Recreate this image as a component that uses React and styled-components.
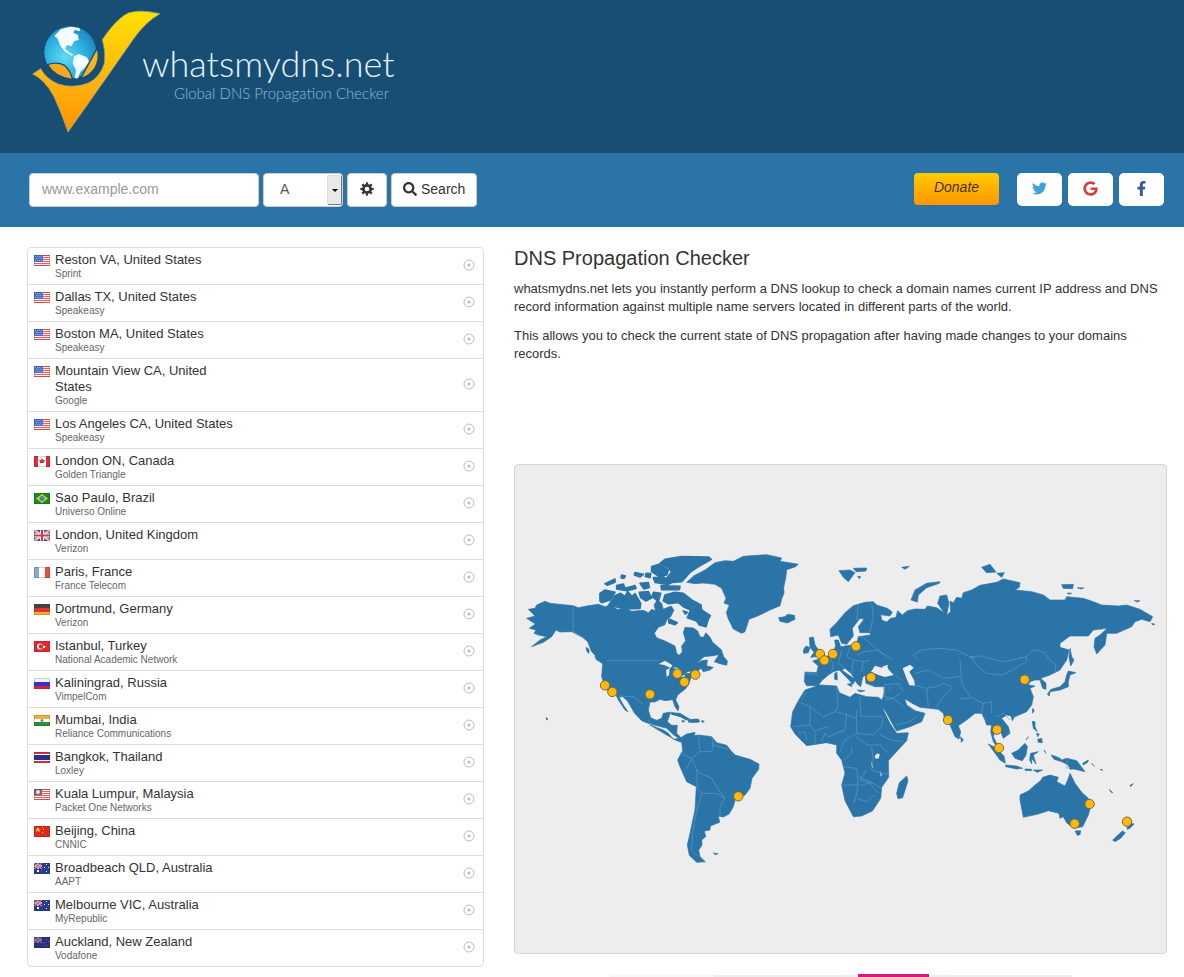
import React from "react"
import styled, { createGlobalStyle } from "styled-components"
import { FaFacebookF, FaGoogle, FaSearch, FaTwitter } from "react-icons/fa"

const GlobalStyle = createGlobalStyle`
  * {
    box-sizing: border-box;
  }

  body {
    margin: 0;
    background: #fff;
    color: #333;
    font-family: "Liberation Sans", Helvetica, Arial, sans-serif;
    font-size: 13px;
    line-height: 18px;
  }
`

const Header = styled.header`
  background: #194e74;
  padding: 0 32px 3px;
`

const Brand = styled.a`
  display: flex;
  color: #fff;
  text-decoration: none;
  font-family: Lato, sans-serif;
  font-weight: 300;

  svg {
    width: 110px;
    height: 150px;
    overflow: visible;
    flex: none;
  }
`

const BrandText = styled.span`
  display: flex;
  flex-direction: column;
  padding-top: 42px;
`

const BrandName = styled.span`
  font-size: 36px;
  line-height: 42px;
  color: #e3f4ff;
`

const BrandTagline = styled.span`
  font-size: 15px;
  line-height: 18px;
  padding-left: 32px;
  color: #8fb8d6;
`

const Toolbar = styled.div`
  display: flex;
  flex-wrap: wrap;
  justify-content: space-between;
  gap: 16px;
  padding: 20px 20px 20px 29px;
  background: #2b74a8;
`

const SearchForm = styled.form`
  display: flex;
  gap: 4px;
`

const DomainInput = styled.input`
  width: 230px;
  height: 34px;
  padding: 0 12px 2px;
  border: 1px solid #ccc;
  border-radius: 4px;
  background: #fff;
  color: #555;
  font: inherit;
  font-size: 14px;

  &::placeholder {
    color: #999;
    opacity: 1;
  }
`

const SelectWrap = styled.div`
  position: relative;
  width: 80px;

  select {
    width: 100%;
    height: 34px;
    padding: 0 16px 2px;
    appearance: none;
    border: 1px solid #ccc;
    border-radius: 4px;
    background: #fff;
    color: #555;
    font: inherit;
    font-size: 14px;
  }

  span {
    position: absolute;
    top: 2px;
    right: 1px;
    width: 15px;
    height: 30px;
    display: flex;
    align-items: center;
    justify-content: center;
    background: #e9e9e9;
    border: 1px solid #ddd;
    border-right-color: #777;
    border-bottom-color: #777;
    border-radius: 2px;
    pointer-events: none;
  }

  span::after {
    content: "";
    border: 3px solid transparent;
    border-top-color: #000;
    border-bottom: 0;
  }
`

const Button = styled.button`
  display: flex;
  align-items: center;
  justify-content: center;
  gap: 4px;
  height: 34px;
  padding: 0 11px 2px;
  border: 1px solid #ccc;
  border-radius: 4px;
  background: #fff;
  color: #333;
  font: inherit;
  font-size: 14px;

  .gear {
    width: 16px;
    height: 16px;
  }
`

const Actions = styled.div`
  display: flex;
  gap: 6px;
`

const Donate = styled.a`
  width: 85px;
  height: 32px;
  margin-right: 12px;
  border-radius: 4px;
  background: linear-gradient(#fecb00, #ff9600);
  color: #4a3206;
  font-size: 14px;
  font-style: italic;
  line-height: 29px;
  text-align: center;
  text-decoration: none;
`

const Social = styled.a`
  display: flex;
  align-items: center;
  justify-content: center;
  width: 45px;
  height: 33px;
  padding-bottom: 2px;
  border-radius: 5px;
  background: #fff;
  color: ${({ $color }) => $color};
  font-size: 15px;
`

const Content = styled.main`
  display: grid;
  grid-template-columns: 457fr 653fr;
  gap: 30px;
  padding: 20px 17px 0 27px;
`

const ServerList = styled.ul`
  margin: 0;
  padding: 0;
  list-style: none;
  align-self: start;
  border: 1px solid #ddd;
  border-radius: 4px;
`

const Server = styled.li`
  display: flex;
  align-items: center;
  gap: 5px;
  padding: 4px 8px 4px 6px;

  & + & {
    border-top: 1px solid #ddd;
  }

  .flag {
    width: 16px;
    height: 11px;
    margin-top: 3px;
    align-self: flex-start;
    flex: none;
  }

  .status {
    width: 12px;
    height: 12px;
    margin-left: auto;
    margin-bottom: 2px;
    flex: none;
  }
`

const ServerInfo = styled.div`
  width: 184px;
`

const ServerName = styled.div`
  line-height: 16px;
`

const Provider = styled.div`
  color: #666;
  font-size: 10px;
  line-height: 12px;
`

const Intro = styled.section`
  min-height: 217px;

  h1 {
    margin: 0 0 11px;
    font-size: 20px;
    font-weight: 400;
    line-height: 22px;
  }

  p {
    margin: 0 0 11px;
  }
`

const MapPanel = styled.div`
  border: 1px solid #d5d5d5;
  border-radius: 4px;
  background: #ededed;

  svg {
    display: block;
    width: 100%;
    height: auto;
  }
`

const Tabs = styled.div`
  display: flex;
  align-items: flex-end;
  width: 71%;
  height: 3px;
  margin: 20px auto 0;

  &::before,
  &::after {
    content: "";
    flex: 250;
    height: 2px;
    background: linear-gradient(90deg, #f8f8f8 42%, #eee 42%);
  }

  &::after {
    flex: 143;
    background: #eee;
  }

  span {
    flex: 71;
    height: 3px;
    background: #cf1a82;
  }
`

const servers = [
  { flag: "us", name: "Reston VA, United States", provider: "Sprint" },
  { flag: "us", name: "Dallas TX, United States", provider: "Speakeasy" },
  { flag: "us", name: "Boston MA, United States", provider: "Speakeasy" },
  { flag: "us", name: "Mountain View CA, United States", provider: "Google" },
  { flag: "us", name: "Los Angeles CA, United States", provider: "Speakeasy" },
  { flag: "ca", name: "London ON, Canada", provider: "Golden Triangle" },
  { flag: "br", name: "Sao Paulo, Brazil", provider: "Universo Online" },
  { flag: "gb", name: "London, United Kingdom", provider: "Verizon" },
  { flag: "fr", name: "Paris, France", provider: "France Telecom" },
  { flag: "de", name: "Dortmund, Germany", provider: "Verizon" },
  { flag: "tr", name: "Istanbul, Turkey", provider: "National Academic Network" },
  { flag: "ru", name: "Kaliningrad, Russia", provider: "VimpelCom" },
  { flag: "in", name: "Mumbai, India", provider: "Reliance Communications" },
  { flag: "th", name: "Bangkok, Thailand", provider: "Loxley" },
  { flag: "my", name: "Kuala Lumpur, Malaysia", provider: "Packet One Networks" },
  { flag: "cn", name: "Beijing, China", provider: "CNNIC" },
  { flag: "au", name: "Broadbeach QLD, Australia", provider: "AAPT" },
  { flag: "au", name: "Melbourne VIC, Australia", provider: "MyRepublic" },
  { flag: "nz", name: "Auckland, New Zealand", provider: "Vodafone" },
]

// pin positions, in map units
const pins = [
  [270, 661], [292, 681], [405, 688], [487, 626], [508, 651], [541, 629],
  [670, 994], [915, 567], [928, 586], [954, 567], [1023, 544], [1068, 637],
  [1299, 765], [1446, 794], [1452, 849], [1529, 644], [1724, 1017],
  [1679, 1076], [1836, 1070],
]

const unionJack = (
  <>
    <path d="M0 0l8 6M8 0L0 6" stroke="#b9c4e6" strokeWidth="1" />
    <path d="M4 0v6M0 3h8" stroke="#fff" strokeWidth="2" />
    <path d="M4 0v6M0 3h8" stroke="#d33" strokeWidth="1" />
  </>
)

const flags = {
  us: (
    <>
      <path fill="#fbeeee" d="M0 0h16v11H0z" />
      <path fill="#e8605c" d="M0 0h16v1H0zM0 2h16v1H0zM0 4h16v1H0zM0 6h16v1H0zM0 8h16v1H0zM0 10h16v1H0z" />
      <path fill="#4a72cc" d="M0 0h9v7H0z" />
      <path fill="#86a3e2" d="M1 1h1v1H1zM3 1h1v1H3zM5 1h1v1H5zM7 1h1v1H7zM2 3h1v1H2zM4 3h1v1H4zM6 3h1v1H6zM1 5h1v1H1zM3 5h1v1H3zM5 5h1v1H5zM7 5h1v1H7z" />
    </>
  ),
  ca: (
    <>
      <path fill="#fff" d="M0 0h16v11H0z" />
      <path fill="#dd2f35" d="M0 0h4v11H0zM12 0h4v11h-4zM8 2l1 2 2 0-1 2 0 1-2 0v2-2H6V6L5 4h2z" />
    </>
  ),
  br: (
    <>
      <path fill="#1d8a1d" d="M0 0h16v11H0z" />
      <path fill="#b5dc3a" d="M8 1l6 4.500-6 4.500-6-4.500z" />
      <circle cx="8" cy="5.500" r="2.500" fill="#4b7fc0" />
    </>
  ),
  gb: (
    <>
      <path fill="#4a5ca8" d="M0 0h16v11H0z" />
      <path d="M0 0l16 11M16 0L0 11" stroke="#fff" strokeWidth="2" />
      <path d="M0 0l16 11M16 0L0 11" stroke="#e08a8a" strokeWidth="1" />
      <path d="M8 0v11M0 5.500h16" stroke="#fff" strokeWidth="4" />
      <path d="M8 0v11M0 5.500h16" stroke="#d63a40" strokeWidth="2" />
    </>
  ),
  fr: (
    <>
      <path fill="#fff" d="M0 0h16v11H0z" />
      <path fill="#8ea6dc" d="M0 0h5v11H0z" />
      <path fill="#e9513e" d="M11 0h5v11h-5z" />
    </>
  ),
  de: (
    <>
      <path fill="#444" d="M0 0h16v4H0z" />
      <path fill="#e2362c" d="M0 4h16v4H0z" />
      <path fill="#f4b427" d="M0 8h16v3H0z" />
    </>
  ),
  tr: (
    <>
      <path fill="#e52a2f" d="M0 0h16v11H0z" />
      <circle cx="6" cy="5.500" r="3" fill="#fff" />
      <circle cx="7" cy="5.500" r="2.200" fill="#e52a2f" />
      <path fill="#fff" d="M9 4l1 1h2l-1 1 0 1-2 0z" />
    </>
  ),
  ru: (
    <>
      <path fill="#f5f5f5" d="M0 0h16v4H0z" />
      <path fill="#3434cf" d="M0 4h16v4H0z" />
      <path fill="#df2233" d="M0 8h16v3H0z" />
    </>
  ),
  in: (
    <>
      <path fill="#f3b13a" d="M0 0h16v4H0z" />
      <path fill="#fff" d="M0 4h16v3H0z" />
      <path fill="#2f8f34" d="M0 7h16v4H0z" />
      <circle cx="8" cy="5.500" r="1.500" fill="#7a86b5" />
    </>
  ),
  th: (
    <>
      <path fill="#e03338" d="M0 0h16v11H0z" />
      <path fill="#fff" d="M0 2h16v7H0z" />
      <path fill="#2b2f8f" d="M0 3h16v5H0z" />
    </>
  ),
  my: (
    <>
      <path fill="#fbeeee" d="M0 0h16v11H0z" />
      <path fill="#e8605c" d="M0 0h16v1H0zM0 2h16v1H0zM0 4h16v1H0zM0 6h16v1H0zM0 8h16v1H0zM0 10h16v1H0z" />
      <path fill="#6b6a8c" d="M0 0h8v6H0z" />
      <circle cx="4" cy="3" r="2" fill="#f3e6b8" />
    </>
  ),
  cn: (
    <>
      <path fill="#e0281e" d="M0 0h16v11H0z" />
      <path fill="#fbd03b" d="M4 1l1 2h2L5 4l1 2-2-1-2 1 1-2-2-1h2zM8 1h1v1H8zM9 3h1v1H9zM8 6h1v1H8z" />
    </>
  ),
  au: (
    <>
      <path fill="#293f8e" d="M0 0h16v11H0z" />
      {unionJack}
      <path fill="#fff" d="M3 7h2v2H3zM12 1h1v1h-1zM14 4h1v1h-1zM10 4h1v1h-1zM12 8h1v1h-1z" />
    </>
  ),
  nz: (
    <>
      <path fill="#26337c" d="M0 0h16v11H0z" />
      <g opacity=".6">{unionJack}</g>
      <path fill="#e05a6a" d="M12 2h1v1h-1zM14 4h1v1h-1zM10 5h1v1h-1zM12 8h1v1h-1z" />
    </>
  ),
}

const Flag = ({ code }) => (
  <svg className="flag" viewBox="0 0 16 11" fill="none" aria-hidden="true">
    {flags[code]}
    <path d="M.5.5h15v10H.5z" stroke="#222" strokeOpacity=".2" />
  </svg>
)

const Pending = () => (
  <svg className="status" viewBox="0 0 12 12" fill="none" aria-hidden="true">
    <circle cx="6" cy="6" r="5" stroke="#bbb" strokeWidth="1" />
    <circle cx="6" cy="6" r="1.500" fill="#bbb" />
  </svg>
)

const Gear = () => (
  <svg className="gear" viewBox="0 0 16 16" fill="none" stroke="currentColor" aria-hidden="true">
    <circle cx="8" cy="8" r="3.700" strokeWidth="2.700" />
    <circle
      cx="8"
      cy="8"
      r="5.600"
      strokeWidth="2.200"
      pathLength="80"
      strokeDasharray="5 5"
      strokeDashoffset="2.500"
    />
  </svg>
)

const Logo = () => (
  <svg viewBox="36 0 330 450" aria-hidden="true">
    <defs>
      <linearGradient id="tick" x1="0" y1="0" x2="0" y2="1">
        <stop offset="0" stopColor="#ffe100" />
        <stop offset=".6" stopColor="#ffb110" />
        <stop offset="1" stopColor="#ff9200" />
      </linearGradient>
      <radialGradient id="globe" cx=".4" cy=".6" r=".65">
        <stop offset="0" stopColor="#5fdcf5" />
        <stop offset=".6" stopColor="#2bb0de" />
        <stop offset="1" stopColor="#1b86c2" />
      </radialGradient>
    </defs>
    <path
      d="M38 222L62 206Q80 238 115 252Q160 267 205 249Q240 233 253 190Q258 155 247 119Q290 55 325 39Q360 27 420 41Q375 67 342 115Q300 175 258 235Q204 312 144 396Q125 340 102 290Q74 238 38 222z"
      fill="url(#tick)"
      stroke="#8fae84"
      strokeWidth="2"
    />
    <circle cx="151" cy="157" r="78" fill="url(#globe)" />
    <path
      d="M103 108L122 88L150 80L178 84L181 94L164 90L160 98L174 105L176 120L163 123L154 139L142 135L135 145L148 158L161 164L155 167L133 154L120 136L112 115z"
      fill="#f4fcff"
    />
    <path d="M162 169L176 162L201 172L207 185L193 205L181 216L174 235L164 235L168 211L158 190z" fill="#f4fcff" />
    <path d="M82 194Q112 184 133 196Q151 211 158 239Q106 233 82 194z" fill="#f7a81c" stroke="#174c70" strokeWidth="4" />
    <path d="M182 235Q204 195 232 144Q240 178 225 204Q208 229 182 235z" fill="#fbb31b" stroke="#174c70" strokeWidth="4" />
  </svg>
)

const WorldMap = () => (
  <svg viewBox="0 0 1953 1464" role="img" aria-label="World map of name servers">
    <g fill="#2a74a8" stroke="#2a74a8" strokeWidth="2" strokeLinejoin="round">
      {/* North America */}
      <g transform="translate(-15 225)">
        <path d="M55 208L75 205L80 195L105 184L120 190L190 197L205 203L230 198L265 193L285 200L300 196L322 208L345 205L365 214L400 211L415 218L425 208L437 212L432 195L442 180L455 190L460 208L483 198L492 210L482 230L470 240L465 254L445 262L433 280L440 293L465 303L495 318L500 340L508 346L517 335L515 318L527 302L520 278L525 262L550 264L563 273L570 290L580 292L588 278L600 292L608 307L635 330L633 343L610 347L582 350L560 370L575 362L592 360L590 378L610 382L600 390L580 395L573 385L545 408L535 435L526 447L503 465L497 480L507 500L504 513L495 500L488 479L465 482L450 478L435 486L420 486L415 510L422 533L440 541L455 535L460 520L482 516L472 545L485 556L502 556L500 580L515 595L530 590L532 600L515 602L488 582L470 565L445 558L420 552L395 542L374 520L352 482L338 470L327 472L340 495L354 515L345 510L325 480L316 461L296 455L283 435L275 410L278 370L270 362L245 335L233 305L218 292L185 275L150 276L138 270L125 290L100 307L65 320L90 300L110 290L85 285L72 280L78 270L58 265L76 252L50 235L75 228z" />
        <path d="M228 322L237 328L237 340L231 335zM255 348L285 366L278 371L258 358zM613 365L635 333L641 350L652 363L650 376L630 371zM485 518L510 520L540 538L528 540L505 526L485 523zM545 540L567 538L568 546L545 547zM515 542L525 543L518 547zM575 543L583 544L578 547zM108 533L114 537L110 540z" />
      </g>
      {/* Arctic islands and Greenland */}
      <g transform="translate(255 240)">
        <g strokeWidth="5">
          <path d="M180 55L195 43L245 35L325 36L334 43L300 62L270 82L245 110L215 112L200 100L215 80L205 68z" />
          <path d="M155 65L178 58L205 75L200 90L178 95L155 80zM160 98L190 96L215 113L205 118L165 112zM183 122L240 124L238 134L185 134zM138 85L152 86L150 98L136 94zM105 83L130 88L120 96L103 90zM15 116L45 102L45 112L22 121zM50 122L70 117L75 130L105 122L108 130L80 137L50 132zM120 115L145 113L148 127L132 132zM65 90L76 93L72 100L63 98z" />
          <path d="M0 145L15 135L45 142L30 165L5 173L0 168zM45 152L62 145L75 155L83 140L96 155L105 146L122 175L120 190L80 192L50 186L25 182z" />
          <path d="M118 142L145 140L155 158L138 168L122 158zM160 142L182 145L175 170L157 155zM195 150L225 142L250 145L275 165L303 180L305 195L331 212L325 222L318 245L298 240L290 228L262 218L272 195L250 185L235 172L206 176L190 168zM207 222L232 233L225 239L206 233zM250 198L262 202L256 207z" />
        </g>
        <path d="M260 112L282 92L315 75L345 53L375 47L400 49L430 34L500 29L545 39L540 49L560 52L595 58L585 66L560 74L557 100L551 127L552 145L545 162L540 182L510 195L475 212L447 223L435 260L425 265L400 252L385 222L379 203L388 180L372 174L378 160L365 130L345 118L310 114L285 116z" />
        <path d="M536 218L555 215L562 208L583 211L585 223L562 234L540 229z" />
      </g>
      {/* South America */}
      <g transform="translate(435 735)">
        <path d="M-30 45L10 60L25 70L40 88L60 85L80 72L105 67L103 77L115 75L155 80L170 98L200 106L213 122L225 135L270 148L297 162L296 178L276 205L270 235L255 255L225 270L220 290L207 312L190 321L175 318L179 337L151 348L150 360L133 363L137 380L125 390L126 405L116 420L120 440L136 455L110 457L88 436L82 405L90 370L105 300L109 230L80 215L58 165L53 150L68 122L65 97L50 92L20 75z" />
        <path d="M160 429L174 431L166 434zM35 8L65 16L82 27L66 22L35 13zM84 29L112 27L115 36L86 37zM125 32L132 34L128 37z" />
      </g>
      {/* Europe, Asia and Africa */}
      <g transform="translate(765 225)">
        <path d="M180 268L200 248L225 218L250 197L285 187L310 185L320 195L352 205L367 216L360 228L332 224L335 240L350 246L362 235L378 232L383 212L397 225L412 212L435 207L465 208L472 198L500 203L522 218L503 190L510 168L530 165L537 190L530 225L542 215L540 183L550 188L560 172L575 175L580 158L605 150L630 136L680 127L700 117L750 128L748 142L735 150L785 155L820 165L840 180L885 180L890 170L940 175L970 185L995 195L1045 198L1070 195L1110 208L1148 230L1140 245L1115 238L1095 245L1085 260L1040 280L1010 280L1005 315L980 342L972 320L975 295L990 285L1012 265L970 270L955 288L900 288L870 310L870 322L897 330L890 360L870 390L840 405L812 415L828 430L828 448L818 445L810 420L795 420L780 425L775 435L795 438L780 445L790 470L785 495L770 515L735 530L710 525L695 535L715 560L720 580L700 595L692 575L675 575L670 590L680 610L695 635L688 630L670 605L662 575L665 555L650 555L645 540L635 520L615 520L590 540L565 557L572 575L567 597L555 590L540 555L525 540L520 520L505 508L450 502L430 492L404 476L410 495L435 512L465 520L455 545L420 560L380 573L372 560L350 520L330 490L340 470L345 440L315 440L288 430L285 405L278 412L272 440L262 432L245 402L225 385L215 390L258 420L248 433L235 418L208 390L190 395L175 405L155 422L145 437L110 437L103 425L105 396L140 398L145 378L128 363L147 357L175 347L190 332L197 318L194 300L205 300L212 320L245 315L262 303L265 290L302 285L300 278L270 278L265 260L282 238L270 235L247 265L250 288L230 313L215 310L205 285L182 290z" />
        <path d="M118 293L130 291L135 315L150 335L155 348L122 352L132 337L120 322zM100 330L108 318L120 323L115 338L101 340zM232 433L245 430L245 440zM194 400L201 397L202 420L194 418zM262 450L285 452L270 456z" />
        <path d="M207 92L240 90L255 98L235 125L220 112zM250 85L290 84L288 93L258 95zM263 109L272 110L268 116zM395 82L418 79L405 88zM423 180L435 150L470 130L510 125L508 130L470 143L445 165L442 186zM635 82L660 73L678 96L650 98zM680 100L703 98L695 112zM875 134L910 133L908 146L880 145zM922 143L942 144L932 147zM892 159L905 160L896 163zM1093 182L1110 182L1102 186zM1145 250L1155 253L1148 255z" />
        <path d="M105 450L150 435L200 438L208 458L240 472L255 460L290 470L325 472L335 480L340 510L360 550L380 580L415 578L410 602L375 640L355 662L356 712L335 742L332 775L308 812L275 828L250 830L225 782L215 735L225 700L215 660L200 640L200 615L170 608L110 617L75 582L62 560L68 515L85 482z" />
        <path d="M410 708L414 722L398 773L384 776L380 760L388 728zM572 590L580 600L574 607zM900 325L905 350L912 360L902 378L897 350zM895 393L918 398L900 405L895 425L895 440L870 450L840 455L838 468L832 462L843 448L870 440L885 425L890 405zM788 505L793 512L787 520zM723 528L733 532L727 542z" />
        <path d="M787 544L795 545L795 560L802 575L790 565zM803 598L815 595L817 608L805 607zM775 590L768 600zM800 580L808 582L803 590zM725 640L745 630L765 610L772 620L768 645L757 662L735 655zM655 612L675 622L702 648L706 670L690 660L672 635zM707 675L740 678L758 685L740 687L707 680zM765 687L785 688L784 692L765 691zM790 690L818 690L802 697zM782 640L805 635L790 645L798 672L785 655L785 672L779 660zM822 630L828 640zM843 645L860 650L870 655L875 660L890 655L920 662L930 675L945 695L925 690L910 687L900 688L895 675L875 665L852 658zM938 670L955 660L953 667L940 675z" />
        <path d="M750 765L775 753L795 735L812 722L818 712L840 705L865 712L860 725L885 738L895 715L900 700L915 730L935 757L955 775L962 800L955 825L938 860L910 865L890 848L880 830L870 835L867 820L835 812L805 822L760 832L757 815L750 780zM915 873L932 872L930 884L922 886zM1070 845L1092 852L1080 865L1072 868zM1028 900L1057 873L1066 878L1052 895L1035 905zM1018 748L1028 758L1023 757zM1080 736L1090 731L1082 740zM965 670L973 679zM990 688L999 691z" />
      </g>
    </g>
    {/* inland water */}
    <g fill="#ededed">
      <g transform="translate(765 225)">
        <path d="M303 395L315 377L335 383L350 375L355 388L371 405L345 411L325 405zM336 380L355 374L350 384zM398 385L420 374L431 383L418 395L432 420L435 437L418 436L408 412zM314 648L322 640L330 644L325 656L316 655zM303 662L310 683L306 682zM332 693L336 710L331 705z" />
      </g>
      <g transform="translate(-15 225)">
        <path d="M446 372L465 362L487 376L482 384L462 375zM468 390L479 384L477 406L470 410zM489 382L505 384L515 398L504 392zM508 410L525 404L523 410zM526 400L540 394L540 399z" />
      </g>
    </g>
    {/* borders */}
    <g fill="none" stroke="#5d9bc8" strokeWidth="2" strokeLinejoin="round">
      <path d="M174 422V500L205 518M275 587H430M312 693L355 695L385 718M400 767L420 785" />
      <g transform="translate(435 735)">
        <path d="M115 80L120 125L155 125L160 100M155 80L160 105L205 118M120 125L95 145L60 130M95 145L110 180L120 190L155 205L170 230L195 265L180 290L180 320M110 180L112 235L125 250L110 300L98 370L95 420L115 440M125 250L170 250L195 265M80 175L95 145" />
      </g>
      <g transform="translate(765 225)">
        <path d="M265 195L260 240M305 190L310 230L300 275M275 290L300 310L325 330L345 345L370 360M240 320L230 350L250 360L280 365L300 360M215 330L205 370L225 385M175 350L190 370L185 395M105 400L145 405M250 360L245 400M280 365L275 395M340 345L325 330L285 335L260 345M340 435L385 430L400 455M375 405L395 420M430 435L470 445L500 440L520 430L545 440M445 360L430 345L455 330L510 325L560 330L600 350L615 355M470 445L475 500M500 500L520 470L545 445M435 400L475 390L520 415L570 410M570 360L575 430L600 470L640 490L665 485M600 350L630 348L700 365L770 350L770 365L700 405L650 400L620 375L600 350M770 350L790 330L820 335L840 360L858 375L855 395M640 490L635 520M600 475L570 475M665 485L665 520M680 530L700 520L720 540" />
        <path d="M110 455L95 480M85 485L120 500L120 555L70 560M120 500L160 530L195 515L205 500L200 440M195 515L215 520L260 535L260 510M270 470L272 530L335 530M230 520L225 570L175 590L165 580L155 605M260 535L260 580L225 600L210 635M260 580L310 585L335 560L340 530M260 590L290 615L330 615L355 640M245 620L245 640L220 660M305 620L310 660L305 690L335 700L355 700M220 680L260 685L265 735L215 735M265 710L310 730L335 745M265 735L255 780L250 790M260 775L290 785L315 765M270 735L300 730L325 760M290 690L270 720L310 730M120 555L135 575L155 565L175 560M85 580L105 575L110 600M135 580L135 612M330 585L365 600L400 605M340 440L345 470L370 475L390 460M355 450L365 440M345 480L370 475L400 500M380 555L420 545L440 530" />
      </g>
      <path d="M1656 882V912" />
    </g>
    <g fill="#ffb90d" stroke="#806b31" strokeWidth="3">
      {pins.map(([x, y]) => (
        <circle key={`${x}-${y}`} cx={x} cy={y} r="14" />
      ))}
    </g>
  </svg>
)

const App = () => {
  return (
    <>
      <GlobalStyle />
      <Header>
        <Brand href="/">
          <Logo />
          <BrandText>
            <BrandName>whatsmydns.net</BrandName>
            <BrandTagline>Global DNS Propagation Checker</BrandTagline>
          </BrandText>
        </Brand>
      </Header>
      <Toolbar>
        <SearchForm onSubmit={(e) => e.preventDefault()}>
          <DomainInput type="text" placeholder="www.example.com" aria-label="Domain name" />
          <SelectWrap>
            <select aria-label="Record type" defaultValue="A">
              <option>A</option>
              <option>AAAA</option>
              <option>CNAME</option>
              <option>MX</option>
              <option>NS</option>
              <option>TXT</option>
            </select>
            <span />
          </SelectWrap>
          <Button type="button" aria-label="Options">
            <Gear />
          </Button>
          <Button type="submit">
            <FaSearch />
            Search
          </Button>
        </SearchForm>
        <Actions>
          <Donate href="#donate">Donate</Donate>
          <Social href="#twitter" aria-label="Twitter" $color="#3fa4dc">
            <FaTwitter />
          </Social>
          <Social href="#google" aria-label="Google" $color="#d3403a">
            <FaGoogle />
          </Social>
          <Social href="#facebook" aria-label="Facebook" $color="#3b5998">
            <FaFacebookF />
          </Social>
        </Actions>
      </Toolbar>
      <Content>
        <ServerList>
          {servers.map(({ flag, name, provider }) => (
            <Server key={name}>
              <Flag code={flag} />
              <ServerInfo>
                <ServerName>{name}</ServerName>
                <Provider>{provider}</Provider>
              </ServerInfo>
              <Pending />
            </Server>
          ))}
        </ServerList>
        <div>
          <Intro>
            <h1>DNS Propagation Checker</h1>
            <p>
              whatsmydns.net lets you instantly perform a DNS lookup to check a
              domain names current IP address and DNS record information against
              multiple name servers located in different parts of the world.
            </p>
            <p>
              This allows you to check the current state of DNS propagation
              after having made changes to your domains records.
            </p>
          </Intro>
          <MapPanel>
            <WorldMap />
          </MapPanel>
          <Tabs>
            <span />
          </Tabs>
        </div>
      </Content>
    </>
  )
}

export default App
